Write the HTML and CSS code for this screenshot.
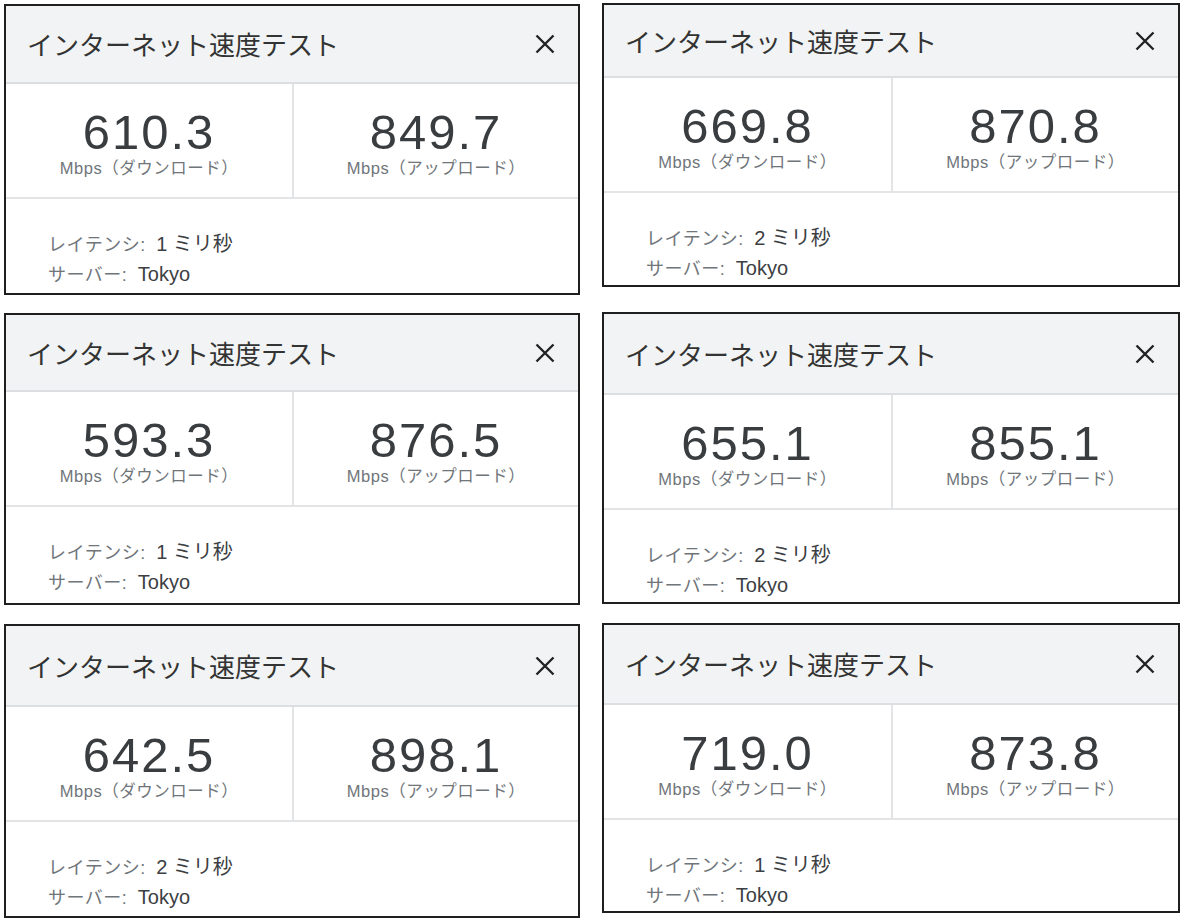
FILE: index.html
```html
<!DOCTYPE html>
<html lang="ja">
<head>
<meta charset="utf-8">
<title>インターネット速度テスト</title>
<link rel="stylesheet" href="styles.css">
</head>
<body>
<div class="board">
  <div class="col col-left">
    <section class="card c1">
      <header class="card-head"><h2 class="card-title">インターネット速度テスト</h2><span class="close"><svg viewBox="0 0 20 20" width="20" height="20"><path d="M1.5 1.5L18.5 18.5M18.5 1.5L1.5 18.5"/></svg></span></header>
      <div class="stats">
        <div class="stat"><div class="value">610.3</div><div class="unit">Mbps（ダウンロード）</div></div>
        <div class="stat"><div class="value">849.7</div><div class="unit">Mbps（アップロード）</div></div>
      </div>
      <div class="info">
        <p class="line"><span class="key">レイテンシ: </span><span class="val">1 ミリ秒</span></p>
        <p class="line"><span class="key">サーバー: </span><span class="val">Tokyo</span></p>
      </div>
    </section>
    <section class="card c3">
      <header class="card-head"><h2 class="card-title">インターネット速度テスト</h2><span class="close"><svg viewBox="0 0 20 20" width="20" height="20"><path d="M1.5 1.5L18.5 18.5M18.5 1.5L1.5 18.5"/></svg></span></header>
      <div class="stats">
        <div class="stat"><div class="value">593.3</div><div class="unit">Mbps（ダウンロード）</div></div>
        <div class="stat"><div class="value">876.5</div><div class="unit">Mbps（アップロード）</div></div>
      </div>
      <div class="info">
        <p class="line"><span class="key">レイテンシ: </span><span class="val">1 ミリ秒</span></p>
        <p class="line"><span class="key">サーバー: </span><span class="val">Tokyo</span></p>
      </div>
    </section>
    <section class="card c5">
      <header class="card-head"><h2 class="card-title">インターネット速度テスト</h2><span class="close"><svg viewBox="0 0 20 20" width="20" height="20"><path d="M1.5 1.5L18.5 18.5M18.5 1.5L1.5 18.5"/></svg></span></header>
      <div class="stats">
        <div class="stat"><div class="value">642.5</div><div class="unit">Mbps（ダウンロード）</div></div>
        <div class="stat"><div class="value">898.1</div><div class="unit">Mbps（アップロード）</div></div>
      </div>
      <div class="info">
        <p class="line"><span class="key">レイテンシ: </span><span class="val">2 ミリ秒</span></p>
        <p class="line"><span class="key">サーバー: </span><span class="val">Tokyo</span></p>
      </div>
    </section>
  </div>
  <div class="col col-right">
    <section class="card c2">
      <header class="card-head"><h2 class="card-title">インターネット速度テスト</h2><span class="close"><svg viewBox="0 0 20 20" width="20" height="20"><path d="M1.5 1.5L18.5 18.5M18.5 1.5L1.5 18.5"/></svg></span></header>
      <div class="stats">
        <div class="stat"><div class="value">669.8</div><div class="unit">Mbps（ダウンロード）</div></div>
        <div class="stat"><div class="value">870.8</div><div class="unit">Mbps（アップロード）</div></div>
      </div>
      <div class="info">
        <p class="line"><span class="key">レイテンシ: </span><span class="val">2 ミリ秒</span></p>
        <p class="line"><span class="key">サーバー: </span><span class="val">Tokyo</span></p>
      </div>
    </section>
    <section class="card c4">
      <header class="card-head"><h2 class="card-title">インターネット速度テスト</h2><span class="close"><svg viewBox="0 0 20 20" width="20" height="20"><path d="M1.5 1.5L18.5 18.5M18.5 1.5L1.5 18.5"/></svg></span></header>
      <div class="stats">
        <div class="stat"><div class="value">655.1</div><div class="unit">Mbps（ダウンロード）</div></div>
        <div class="stat"><div class="value">855.1</div><div class="unit">Mbps（アップロード）</div></div>
      </div>
      <div class="info">
        <p class="line"><span class="key">レイテンシ: </span><span class="val">2 ミリ秒</span></p>
        <p class="line"><span class="key">サーバー: </span><span class="val">Tokyo</span></p>
      </div>
    </section>
    <section class="card c6">
      <header class="card-head"><h2 class="card-title">インターネット速度テスト</h2><span class="close"><svg viewBox="0 0 20 20" width="20" height="20"><path d="M1.5 1.5L18.5 18.5M18.5 1.5L1.5 18.5"/></svg></span></header>
      <div class="stats">
        <div class="stat"><div class="value">719.0</div><div class="unit">Mbps（ダウンロード）</div></div>
        <div class="stat"><div class="value">873.8</div><div class="unit">Mbps（アップロード）</div></div>
      </div>
      <div class="info">
        <p class="line"><span class="key">レイテンシ: </span><span class="val">1 ミリ秒</span></p>
        <p class="line"><span class="key">サーバー: </span><span class="val">Tokyo</span></p>
      </div>
    </section>
  </div>
</div>
</body>
</html>
```
FILE: styles.css
```css
html, body {
  margin: 0;
  padding: 0;
  background: #ffffff;
}

body {
  font-family: "Liberation Sans", Arial, "Noto Sans CJK JP", sans-serif;
  color: #3c4043;
}

.board {
  display: flex;
  gap: 22px;
  padding-left: 4px;
}

.col {
  display: flex;
  flex-direction: column;
  width: 576px;
}

.col-right {
  width: 578px;
}

.card {
  box-sizing: border-box;
  border: 2px solid #1f1f1f;
  background: #ffffff;
  display: flex;
  flex-direction: column;
}

.card-head {
  box-sizing: border-box;
  display: flex;
  align-items: center;
  justify-content: space-between;
  padding: 0 23px 0 21px;
  background: #f1f3f4;
  border-bottom: 2px solid #dcdee1;
}

.card-title {
  margin: 0;
  font-family: "Noto Sans CJK JP", sans-serif;
  font-weight: 400;
  font-size: 26px;
  line-height: 30px;
  color: #333333;
}

.close {
  display: flex;
  width: 20px;
  height: 20px;
}

.close svg {
  stroke: #222222;
  stroke-width: 2.4;
  fill: none;
}

.stats {
  box-sizing: border-box;
  height: 115px;
  display: grid;
  grid-template-columns: 1fr 1fr;
  border-bottom: 2px solid #e3e4e6;
}

.stat {
  text-align: center;
  padding-top: 24px;
}

.stat + .stat {
  border-left: 2px solid #e3e4e6;
}

.value {
  font-size: 49px;
  line-height: 48px;
  letter-spacing: 2px;
  color: #3a3d40;
}

.unit {
  margin-top: 2px;
  font-size: 16.5px;
  line-height: 20px;
  letter-spacing: 0.5px;
  color: #70757a;
}

.info {
  flex: 1;
  padding: 31px 0 0 42px;
}

.line {
  margin: 0;
  line-height: 28px;
  white-space: nowrap;
}

.key {
  font-size: 18px;
  letter-spacing: 0.5px;
  color: #70757a;
}

.val {
  margin-left: 5px;
  font-size: 20px;
  color: #3c4043;
}

/* per-card geometry (the source is a collage of six captures) */
.c1 { margin-top: 4px; height: 291px; }
.c1 .card-head { height: 78px; }

.c3 { margin-top: 18px; height: 292px; }
.c3 .card-head { height: 77px; }

.c5 { margin-top: 19px; height: 294px; }
.c5 .card-head { height: 81px; }

.c2 { margin-top: 3px; height: 284px; }
.c2 .card-head { height: 73px; }

.c4 { margin-top: 25px; height: 292px; }
.c4 .card-head { height: 81px; }

.c6 { margin-top: 19px; height: 290px; }
.c6 .card-head { height: 80px; }
```
